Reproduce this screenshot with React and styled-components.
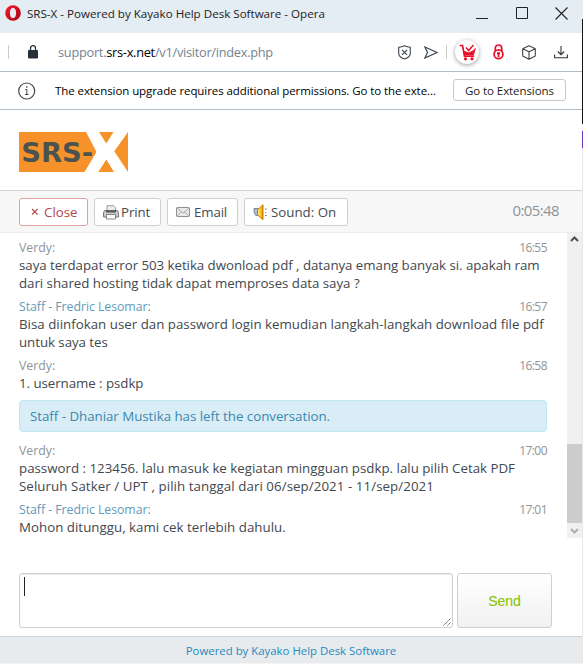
import React from "react";
import styled, { createGlobalStyle } from "styled-components";

const Global = createGlobalStyle`
  * { box-sizing: border-box; }
  body { margin: 0; background: #fff; }
`;

const Frame = styled.div`
  display: grid;
  grid-template-columns: 582px 1px;
  width: 583px;
  height: 664px;
  overflow: hidden;
  font-family: "Open Sans", "Noto Sans", sans-serif;
`;
const Window = styled.div`
  display: flex;
  flex-direction: column;
  height: 664px;
  background: #fff;
`;
const Backdrop = styled.div`
  background: linear-gradient(#e4ecf4 0 19px, #101318 19px 124px, #fff 124px 131px, #6a35bc 131px 148px, #e8e8e8 148px);
`;
const Text = styled.span`
  display: block;
  white-space: pre;
  font-size: ${(p) => p.$size || 13.3}px;
  letter-spacing: ${(p) => p.$ls || 0}px;
  color: ${(p) => p.$color || "inherit"};
`;

const TitleBar = styled.header`
  display: flex;
  align-items: center;
  height: 33px;
  padding: 0 14px 7px 5px;
  background: #e4ecf4;
  color: #222;
`;
const TitleText = styled(Text)`
  flex: 1;
  margin-left: 6px;
`;
const WindowControls = styled.div`
  display: flex;
  gap: 27px;
  svg { display: block; }
`;

const AddressBar = styled.div`
  display: flex;
  align-items: center;
  height: 39px;
  padding: 0 14px 0 8px;
  border-bottom: 1px solid #b0bcc6;
`;
const Divider = styled.i`
  width: 1px;
  height: 14px;
  background: #ccc;
  margin-right: ${(p) => p.$after}px;
`;
const Url = styled.div`
  flex: 1;
  margin-left: 20px;
  white-space: pre;
  font-size: 12.8px;
  letter-spacing: -0.28px;
  color: #758391;
  b { font-weight: 400; color: #000; }
`;
const AddressIcons = styled.div`
  display: flex;
  align-items: center;
  svg { display: block; }
`;
const IconSlot = styled.span`
  width: ${(p) => p.$w}px;
  margin-right: ${(p) => p.$after || 0}px;
`;
const RoundBadge = styled.span`
  display: grid;
  place-items: center;
  width: 24px;
  height: 24px;
  margin-right: 14px;
  border-radius: 50%;
  background: #fff;
  box-shadow: 0 1px 4px rgba(0, 0, 0, 0.4);
`;

const ExtensionBar = styled.div`
  display: flex;
  align-items: center;
  height: 38px;
  padding: 0 16px 0 18px;
  border-bottom: 1px solid #b0bcc6;
  color: #000;
`;
const ExtensionText = styled(Text)`
  flex: 1;
  margin-left: 19px;
`;
const ExtensionButton = styled.button`
  display: grid;
  place-items: center;
  width: 113px;
  height: 22px;
  padding: 0;
  margin-bottom: 1px;
  border: 1px solid #c8c8c8;
  border-radius: 3px;
  background: #fff;
  font-family: inherit;
  color: #222;
`;

const Brand = styled.div`
  height: 81px;
  padding: 22px 0 0 19px;
  border-bottom: 1px solid #cfd6da;
`;
const Toolbar = styled.div`
  display: flex;
  align-items: flex-start;
  height: 42px;
  padding: 7px 23px 0 19px;
  background: #f7f7f7;
  border-bottom: 1px solid #ececec;
`;
const ToolButton = styled.button`
  display: flex;
  align-items: center;
  width: ${(p) => p.$w}px;
  height: 28px;
  margin-right: 6px;
  padding: 0 0 0 ${(p) => p.$pad}px;
  gap: ${(p) => p.$gap}px;
  border: 1px solid ${(p) => (p.$danger ? "#e2a0a0" : "#cbd1d3")};
  border-radius: 3px;
  background: #fff;
  color: ${(p) => (p.$danger ? "#b04848" : "#444b51")};
  font-family: inherit;
`;
const Timer = styled(Text)`
  margin-left: auto;
  line-height: 24px;
`;

const ChatArea = styled.main`
  display: flex;
  height: 305px;
`;
const Messages = styled.div`
  flex: 1;
  display: flex;
  flex-direction: column;
  gap: 5px;
  padding: 6px 20px 0 19px;
`;
const MessageBlock = styled.article`
  padding-bottom: 1px;
`;
const MessageHead = styled.div`
  display: flex;
  justify-content: space-between;
  height: 17px;
  line-height: 18px;
  color: ${(p) => (p.$staff ? "#5f9ab9" : "#8e9499")};
`;
const Body = styled(Text)`
  line-height: 18px;
  color: #42484e;
`;
const Notice = styled.div`
  height: 32px;
  margin: 2px 0 5px;
  padding-left: 10px;
  line-height: 30px;
  border: 1px solid #bce8f1;
  border-radius: 4px;
  background: #d9edf7;
  color: #3a87ad;
`;
const ScrollTrack = styled.div`
  display: flex;
  flex-direction: column;
  justify-content: space-between;
  width: 15px;
  background: #f0f0f0;
  svg { display: block; }
`;
const ScrollThumb = styled.div`
  height: 79px;
  margin-top: 196px;
  background: #cdcdcd;
`;

const Composer = styled.div`
  display: flex;
  gap: 4px;
  height: 98px;
  padding: 35px 30px 0 19px;
`;
const Input = styled.div`
  display: flex;
  align-items: flex-end;
  justify-content: space-between;
  width: 434px;
  height: 55px;
  padding: 0 1px 1px 4px;
  border: 1px solid #cbd1d1;
  border-radius: 3px;
  box-shadow: inset 0 1px 1px rgba(0, 0, 0, 0.08);
`;
const Caret = styled.i`
  align-self: flex-start;
  width: 1px;
  height: 19px;
  margin-top: 3px;
  background: #222;
`;
const SendButton = styled.button`
  width: 95px;
  height: 55px;
  padding: 0;
  border: 1px solid #cbd1d1;
  border-radius: 3px;
  background: linear-gradient(#fff, #f1f1f1);
  font: 14px "Liberation Sans", sans-serif;
  color: #86c300;
  -webkit-text-stroke: 0.1px #86c300;
`;
const Footer = styled.footer`
  display: flex;
  justify-content: center;
  height: 28px;
  border-top: 1px solid #ccd4d8;
  border-bottom: 1px solid #f4f4f4;
  background: #e7ebee;
  color: #1e8abf;
  line-height: 28px;
`;

const OperaIcon = () => (
  <svg width="16" height="16" viewBox="0 0 16 16">
    <defs>
      <linearGradient id="opera" x1="0" y1="0" x2="1" y2="1">
        <stop offset="0" stopColor="#ff1b2d" />
        <stop offset="1" stopColor="#a70014" />
      </linearGradient>
    </defs>
    <path fillRule="evenodd" fill="url(#opera)" d="M8 .2a7.800 7.800 0 1 0 0 15.600A7.800 7.800 0 0 0 8 .2zm0 2.600c2 0 3.100 2.300 3.100 5.200S10 13.200 8 13.200 4.900 10.900 4.900 8 6 2.800 8 2.800z" />
  </svg>
);
const Minimize = () => (
  <svg width="13" height="13"><path d="M1 11.500h12" stroke="#222" /></svg>
);
const Maximize = () => (
  <svg width="13" height="13"><path d="M1.500.500h11v11h-11z" fill="none" stroke="#222" /></svg>
);
const CloseX = () => (
  <svg width="13" height="13"><path d="M.5.500l12 12M12.500.500l-12 12" stroke="#222" strokeWidth="1.100" /></svg>
);
const PadLock = () => (
  <svg width="10" height="14" viewBox="0 0 10 14">
    <path d="M2.500 7V3.200a2.500 2.500 0 0 1 5 0V7" fill="none" stroke="#26303b" strokeWidth="1.300" />
    <rect y="5" width="10" height="8.500" rx="1" fill="#26303b" />
  </svg>
);
const Shield = () => (
  <svg width="13" height="15" viewBox="0 0 13 15" fill="none" stroke="#3a444e" strokeWidth="1.100">
    <path d="M.7 2.300Q3.900 2.100 6.500.800 9.100 2.100 12.300 2.300V8.500c0 3-3 4.600-5.800 5.600C3.700 13.100.7 11.500.7 8.500z" />
    <path d="M4 4.800l5 5M9 4.800l-5 5" />
  </svg>
);
const SendArrow = () => (
  <svg width="14" height="13" viewBox="0 0 14 13" fill="none" stroke="#3a444e" strokeWidth="1.200">
    <path d="M.9 1L13 6.500.900 12l2.600-5.500z" />
  </svg>
);
const Cart = () => (
  <svg width="17" height="17" viewBox="0 0 17 17" fill="none" stroke="#e8102a" strokeWidth="1.700">
    <path d="M.5 1.500h3l2 10.700h9.700" />
    <path d="M4.600 7.200L5.400 10.500h9.200l1.600-6-1.800 2.200-4.600 2.300z" fill="#e8102a" strokeWidth="1" />
    <path d="M7 3.500l2.600 3L14.500 1" strokeWidth="1.500" />
    <circle cx="6.500" cy="14.800" r=".8" /><circle cx="13" cy="14.800" r=".8" />
  </svg>
);
const RedLock = () => (
  <svg width="11" height="16" viewBox="0 0 11 16">
    <path d="M2.300 7V4a3.200 3 0 0 1 6.400 0v3" fill="none" stroke="#e8102a" strokeWidth="1.700" />
    <circle cx="5.500" cy="10.300" r="4.400" fill="#fff" stroke="#e8102a" strokeWidth="1.800" />
    <path d="M4 8.300h3v2h-.6V13H4.600v-2.700H4z" fill="#e8102a" />
  </svg>
);
const Cube = () => (
  <svg width="14" height="15" viewBox="0 0 14 15" fill="none" stroke="#444" strokeWidth="1.100" strokeLinejoin="round">
    <path d="M7 .8l6.300 2.900v7.400L7 14.200.700 11.100V3.700zM.7 3.700L7 6.800l6.300-3.100M7 6.800v7.400" />
  </svg>
);
const Download = () => (
  <svg width="14" height="14" viewBox="0 0 14 14" fill="none" stroke="#333" strokeWidth="1.100">
    <path d="M7 1v8.500M3.800 6.500L7 9.700l3.200-3.200M.600 9.500v3.200h12.800V9.500" />
  </svg>
);
const Info = () => (
  <svg width="18" height="18" viewBox="0 0 18 18" fill="none" stroke="#444">
    <circle cx="8.700" cy="9" r="8" strokeWidth="1.200" />
    <path d="M7.300 7.500h1.500v5M7.100 12.500h3.400" strokeWidth="1" />
    <path d="M8.100 5h1.300" strokeWidth="1.300" />
  </svg>
);
const Logo = () => (
  <svg width="109" height="40" viewBox="0 0 109 40">
    <path fill="#f7922a" d="M0 0h67l10.500 20L65.500 40H0zM80 0h14.500l-7.200 11.500zM109 0v40L95.300 19.300zM79.300 40l8-12.500L95 40z" />
    <text x="2.200" y="29.900" fontFamily="DejaVu Sans" fontWeight="700" fontSize="26.500" textLength="72" lengthAdjust="spacingAndGlyphs" fill="#4b5250">SRS-</text>
  </svg>
);
const Printer = () => (
  <svg width="16" height="15" viewBox="0 0 16 15">
    <path d="M4 6V.700h6.500L12.500 3v3" fill="#eee" stroke="#9a9a9a" />
    <path d="M1.500 5.500h13l1 2V12h-15V7.500z" fill="#c9c9c9" stroke="#777" />
    <path d="M3 5.500h10v2H3z" fill="#555" />
    <path d="M3.500 9.500h9v4.500h-9z" fill="#fafafa" stroke="#888" />
  </svg>
);
const Mail = () => (
  <svg width="14" height="10" viewBox="0 0 14 10" fill="#e9e9e9" stroke="#8f8f8f">
    <rect x=".5" y=".5" width="13" height="9" rx=".7" />
    <path d="M1 1l6 5 6-5M1 9l4.300-4M13 9L8.700 5" fill="none" strokeWidth=".7" />
  </svg>
);
const Speaker = () => (
  <svg width="15" height="17" viewBox="0 0 15 17">
    <defs>
      <linearGradient id="horn"><stop offset="0" stopColor="#fff0a0" /><stop offset=".6" stopColor="#ffc414" /><stop offset="1" stopColor="#e08a00" /></linearGradient>
    </defs>
    <path d="M1 4.500h5v7H3C1.500 11 .7 7 1 4.500z" fill="#aebccb" stroke="#60758c" strokeWidth=".8" />
    <path d="M4.500 6L10 .700v15L4.500 11z" fill="url(#horn)" stroke="#b87400" strokeWidth=".9" />
    <path d="M12 5h1.800M12 8.500h1M12 11.500h1.800" stroke="#8d8458" strokeWidth="1.100" />
  </svg>
);
const ScrollUp = () => (
  <svg width="15" height="15"><path d="M4 8L7.500 4.500 11 8" fill="none" stroke="#505050" strokeWidth="2" /></svg>
);
const ScrollDown = () => (
  <svg width="15" height="15"><path d="M4 6L7.500 9.500 11 6" fill="none" stroke="#b0b0b0" strokeWidth="2.200" /></svg>
);
const Grip = () => (
  <svg width="8" height="8"><path d="M.5 7.500l7-7M4.500 7.500l3-3" stroke="#555" strokeDasharray="1.400 .5" /></svg>
);

const Message = ({ name, nameLs, staff, time, lines }) => (
  <MessageBlock>
    <MessageHead $staff={staff}>
      <Text $size={12.3} $ls={nameLs}>{name}</Text>
      <Text $size={12} $ls={-0.55} $color="#8e9499">{time}</Text>
    </MessageHead>
    {lines.map(([text, ls]) => <Body key={text} $ls={ls}>{text}</Body>)}
  </MessageBlock>
);

export default function App() {
  return (
    <Frame>
      <Global />
      <Window>
        <TitleBar>
          <OperaIcon />
          <TitleText $size={11.6} $ls={0}>SRS-X - Powered by Kayako Help Desk Software - Opera</TitleText>
          <WindowControls><Minimize /><Maximize /><CloseX /></WindowControls>
        </TitleBar>
        <AddressBar>
          <Divider $after={19} />
          <PadLock />
          <Url>support.<b>srs-x.net</b>/v1/visitor/index.php</Url>
          <AddressIcons>
            <IconSlot $w={13} $after={13}><Shield /></IconSlot>
            <IconSlot $w={14} $after={8}><SendArrow /></IconSlot>
            <Divider $after={8} />
            <RoundBadge><Cart /></RoundBadge>
            <IconSlot $w={11} $after={18}><RedLock /></IconSlot>
            <IconSlot $w={14} $after={18}><Cube /></IconSlot>
            <IconSlot $w={14}><Download /></IconSlot>
          </AddressIcons>
        </AddressBar>
        <ExtensionBar>
          <Info />
          <ExtensionText $size={11.5} $ls={-0.08}>The extension upgrade requires additional permissions. Go to the exte...</ExtensionText>
          <ExtensionButton><Text $size={11.5} $ls={-0.08}>Go to Extensions</Text></ExtensionButton>
        </ExtensionBar>
        <Brand><Logo /></Brand>
        <Toolbar>
          <ToolButton $danger $w={69} $pad={11} $gap={5}>
            <svg width="8" height="8"><path d="M1 1l5.500 5.500M6.500 1L1 6.500" stroke="#b04848" strokeWidth="1.100" /></svg>
            <Text>Close</Text>
          </ToolButton>
          <ToolButton $w={67} $pad={8} $gap={2}><Printer /><Text $ls={-0.1}>Print</Text></ToolButton>
          <ToolButton $w={71} $pad={8} $gap={4}><Mail /><Text $ls={-0.15}>Email</Text></ToolButton>
          <ToolButton $w={104} $pad={8} $gap={3}><Speaker /><Text>Sound: On</Text></ToolButton>
          <Timer $size={15} $ls={-0.6} $color="#8e9499">0:05:48</Timer>
        </Toolbar>
        <ChatArea>
          <Messages>
            <Message name="Verdy:" time="16:55" lines={[
              ["saya terdapat error 503 ketika dwonload pdf , datanya emang banyak si. apakah ram", -0.045],
              ["dari shared hosting tidak dapat memproses data saya ?", -0.03],
            ]} />
            <Message staff name="Staff - Fredric Lesomar:" nameLs={-0.04} time="16:57" lines={[
              ["Bisa diinfokan user dan password login kemudian langkah-langkah download file pdf", 0.01],
              ["untuk saya tes", -0.05],
            ]} />
            <Message name="Verdy:" time="16:58" lines={[["1. username : psdkp", -0.05]]} />
            <Notice><Text $ls={-0.02}>Staff - Dhaniar Mustika has left the conversation.</Text></Notice>
            <Message name="Verdy:" time="17:00" lines={[
              ["password : 123456. lalu masuk ke kegiatan mingguan psdkp. lalu pilih Cetak PDF", 0],
              ["Seluruh Satker / UPT , pilih tanggal dari 06/sep/2021 - 11/sep/2021", 0.07],
            ]} />
            <Message staff name="Staff - Fredric Lesomar:" nameLs={-0.04} time="17:01" lines={[["Mohon ditunggu, kami cek terlebih dahulu.", 0.02]]} />
          </Messages>
          <ScrollTrack><ScrollUp /><ScrollThumb /><ScrollDown /></ScrollTrack>
        </ChatArea>
        <Composer>
          <Input><Caret /><Grip /></Input>
          <SendButton>Send</SendButton>
        </Composer>
        <Footer><Text $size={11.4}>Powered by Kayako Help Desk Software</Text></Footer>
      </Window>
      <Backdrop />
    </Frame>
  );
}
